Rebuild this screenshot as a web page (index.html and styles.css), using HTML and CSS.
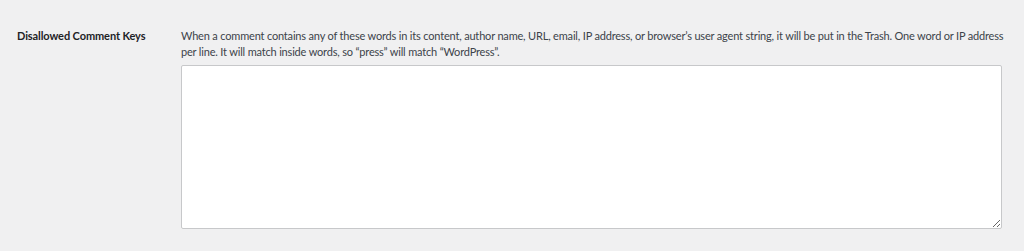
FILE: index.html
```html
<!DOCTYPE html>
<html lang="en">
<head>
    <meta charset="UTF-8">
    <meta name="viewport" content="width=device-width, initial-scale=1.0">
    <title>Discussion Settings</title>
    <link rel="stylesheet" href="styles.css">
</head>
<body>
    <div class="form-row">
        <label class="row-label" for="disallowed_keys">Disallowed Comment Keys</label>
        <div class="row-field">
            <p class="description">When a comment contains any of these words in its content, author name, URL, email, IP address, or browser&rsquo;s user agent string, it will be put in the Trash. One word or IP address per line. It will match inside words, so &ldquo;press&rdquo; will match &ldquo;WordPress&rdquo;.</p>
            <textarea id="disallowed_keys" class="keys-box"></textarea>
        </div>
    </div>
</body>
</html>
```

FILE: styles.css
```css
body {
    margin: 0;
    background: #f0f0f1;
    font-family: Lato, "Noto Sans", sans-serif;
    font-size: 11px;
    color: #3c434a;
}
.form-row {
    display: flex;
    padding: 28px 0 0 17px;
}
.row-label {
    width: 164px;
    flex-shrink: 0;
    font-weight: 700;
    color: #1d2327;
    line-height: 16px;
    letter-spacing: -0.1px;
}
.row-field {
    width: 828px;
}
.description {
    margin: 0 0 5px;
    line-height: 16px;
    letter-spacing: -0.18px;
}
.keys-box {
    display: block;
    box-sizing: border-box;
    width: 821px;
    height: 164px;
    margin: 0;
    background: #fff;
    border: 1px solid #c7c8ca;
    border-radius: 2px;
    resize: vertical;
}
```
